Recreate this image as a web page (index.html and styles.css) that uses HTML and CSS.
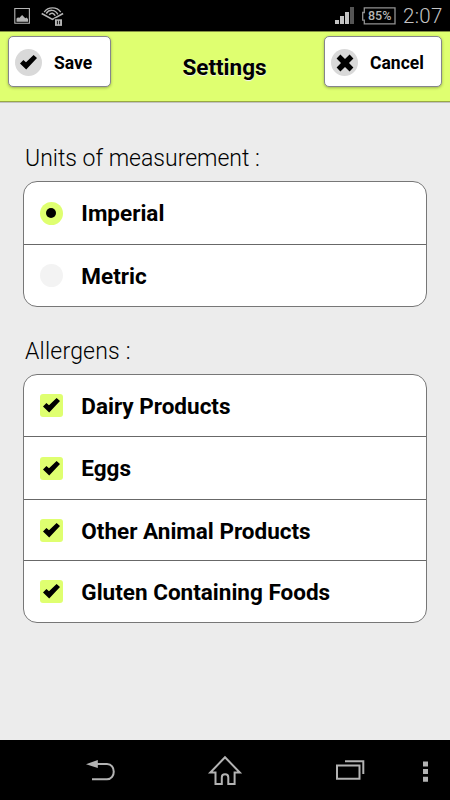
FILE: index.html
```html
<!DOCTYPE html>
<html lang="en">
<head>
<meta charset="utf-8">
<title>Settings</title>
<link rel="stylesheet" href="styles.css">
</head>
<body>
<svg class="defs" width="0" height="0" aria-hidden="true">
  <symbol id="check" viewBox="0 0 17 15"><path d="M0 8.4 3.4 5 6 7.3 13.6 0 17 3 6.2 14.6Z"/></symbol>
</svg>
<div class="status">
  <svg width="70" height="31" viewBox="0 0 70 31">
    <path d="M14.8 8.5h14.6v14.8H14.8z" fill="none" stroke="#b5b5b5" stroke-width="1.1"/>
    <path d="M16.5 21.7v-3.2l1.6-1.2 1 .6 3-2.8 3.2 3.2 1.2-.7 1.5 1.5v2.6z" fill="#b5b5b5"/>
    <g fill="none" stroke="#b5b5b5">
      <path d="M41.7 13.6 52.4 19.4 63.1 13.6" stroke-width="1.7"/>
      <path d="M44.2 12.1C48 6.5 57 6.5 60.7 12.1" stroke-width="1.3"/>
      <path d="M46.2 13.5C49 9.2 55 9.2 57.8 14.3" stroke-width="1.5"/>
      <path d="M49.2 14.8C51.2 12.4 53.8 12.8 55.2 15.8" stroke-width="1.5"/>
    </g>
    <path d="M54.3 18.6h8.4v8.2h-8.4z"/>
    <path d="M55 19.3h7v6.6h-7z" fill="#b5b5b5"/>
    <path d="M57.4 20.8v3.5M59.6 20.8v3.5" stroke="#000" stroke-width=".9"/>
  </svg>
  <span class="grow"></span>
  <svg class="signal" width="20" height="18" viewBox="0 0 20 18">
    <path d="M0 13h4v4H0zM5 9h4v8H5zM10 5h4v12h-4z" fill="#c4c4c4"/>
    <path d="M15 0h4v17h-4z" fill="#555"/>
  </svg>
  <span class="battery">
    <svg width="36" height="18" viewBox="0 0 36 18"><path d="M3.3.8H34v16H3.3v-3.6H1.7V5.5h1.6z" fill="none" stroke="#929292" stroke-width="1.3"/></svg>
    <span class="percent">85%</span>
  </span>
  <span class="clock">2:07</span>
</div>
<header class="header">
  <button class="button save"><span class="disc"><svg width="17" height="15"><use href="#check"/></svg></span><span class="button-label">Save</span></button>
  <h1 class="title">Settings</h1>
  <button class="button cancel"><span class="disc"><svg width="18" height="18" viewBox="0 0 18 18"><path d="M4.4.6 9 5 13.6.6 17.4 4.4 13 9 17.4 13.6 13.6 17.4 9 13 4.4 17.4.6 13.6 5 9 .6 4.4Z"/></svg></span><span class="button-label">Cancel</span></button>
</header>
<main class="content">
  <h2 class="heading">Units of measurement :</h2>
  <div class="card">
    <div class="row"><span class="radio checked"></span><span class="label">Imperial</span></div>
    <div class="row"><span class="radio"></span><span class="label">Metric</span></div>
  </div>
  <h2 class="heading allergens">Allergens :</h2>
  <div class="card list">
    <div class="row"><span class="box"><svg width="17" height="15"><use href="#check"/></svg></span><span class="label">Dairy Products</span></div>
    <div class="row"><span class="box"><svg width="17" height="15"><use href="#check"/></svg></span><span class="label">Eggs</span></div>
    <div class="row"><span class="box"><svg width="17" height="15"><use href="#check"/></svg></span><span class="label">Other Animal Products</span></div>
    <div class="row"><span class="box"><svg width="17" height="15"><use href="#check"/></svg></span><span class="label">Gluten Containing Foods</span></div>
  </div>
</main>
<nav class="nav">
  <svg width="450" height="60" viewBox="0 740 450 60" fill="none" stroke="#b3b3b3" stroke-width="2">
    <path d="M97 764h10c9 0 9 15.3 0 15.3H92"/>
    <path d="M86 764.2 97.8 760v8z" fill="#b3b3b3" stroke="none"/>
    <path d="M225 757.3 210.3 772.5H215.5V784h6.3v-6.5c0-4.2 6.5-4.2 6.5 0V784h6.3V772.5H239.8Z"/>
    <path d="M337 765.5h22.5v13.2H337zM345 761.3h18.3V774"/>
    <path d="M423 761.5h5v5h-5zM423 769h5v5h-5zM423 776.7h5v5h-5z" fill="#b3b3b3" stroke="none"/>
  </svg>
</nav>
</body>
</html>
```
FILE: styles.css
```css
* { box-sizing: border-box; }
body {
  margin: 0;
  width: 450px;
  height: 800px;
  display: flex;
  flex-direction: column;
  overflow: hidden;
  background: #ececec;
  color: #000;
  font-family: Roboto, "Liberation Sans", sans-serif;
}
svg { display: block; flex: none; }
.defs { position: absolute; }
.status {
  height: 31px;
  flex: none;
  display: flex;
  background: #000;
  color: #b5b5b5;
}
.grow { flex: 1; }
.signal { margin: 7px 6px 0 0; }
.battery { position: relative; width: 36px; margin: 7px 6px 0 0; }
.percent {
  position: absolute;
  left: 7px;
  top: 1px;
  font-size: 12.5px;
  line-height: 15px;
  font-weight: 500;
}
.clock { width: 47px; font-size: 20.5px; line-height: 33px; font-weight: 300; letter-spacing: .3px; color: #c4c4c4; }
.header {
  height: 71px;
  flex: none;
  display: flex;
  align-items: flex-start;
  justify-content: space-between;
  padding: 4px 7px 0;
  border-top: 1px solid #838f42;
  border-bottom: 1px solid #99a944;
  background: #dfff70;
  box-shadow: 0 1px 0 #c2c2c2;
}
.button {
  height: 51px;
  display: flex;
  align-items: center;
  padding: 2px 0 0 6px;
  border: 1px solid #85858b;
  border-radius: 5px;
  background: #fff;
  box-shadow: 0 1px 3px rgba(0, 0, 0, .3);
  color: #000;
  font: 700 17.5px/20px Roboto, "Liberation Sans", sans-serif;
}
.save { width: 103px; margin-left: 1px; }
.cancel { width: 118px; margin-right: 1px; }
.disc {
  width: 27px;
  height: 27px;
  flex: none;
  display: flex;
  align-items: center;
  justify-content: center;
  border-radius: 50%;
  background: #d9d9d9;
}
.button-label { margin-left: 12px; }
.title {
  margin: 16px 0 0 14px;
  font-size: 22.5px;
  line-height: 30px;
  font-weight: 700;
  text-shadow: 0 1px 1px #f3f3f3;
}
.content { flex: 1; padding: 40px 23px 0; }
.heading {
  margin: 0 0 0 2px;
  height: 39px;
  font-size: 23px;
  line-height: 34px;
  font-weight: 300;
}
.allergens { margin-top: 28px; letter-spacing: .2px; }
.card {
  border: 1px solid #777;
  border-radius: 14px;
  background: #fff;
  overflow: hidden;
}
.row {
  height: 62px;
  display: flex;
  align-items: center;
  padding-left: 16px;
}
.row + .row { border-top: 1px solid #686868; }
.list .row:nth-child(odd) { height: 61px; }
.list .row:nth-child(2) { height: 63px; }
.list .row:nth-child(3) .label { padding-top: 1px; }
.list .row:last-child { height: 62px; }
.radio, .box {
  width: 23px;
  height: 23px;
  flex: none;
  display: flex;
  align-items: center;
  justify-content: center;
  border-radius: 50%;
  background: #f3f3f3;
}
.checked { background: #dfff70; }
.checked::before {
  content: "";
  width: 10px;
  height: 10px;
  margin-right: 1px;
  border-radius: 50%;
  background: #000;
}
.box { border-radius: 3px; background: #dfff70; }
.label { margin-left: 18.3px; font-size: 22.5px; line-height: 30px; font-weight: 700; }
.nav { height: 60px; flex: none; background: #000; }
```
